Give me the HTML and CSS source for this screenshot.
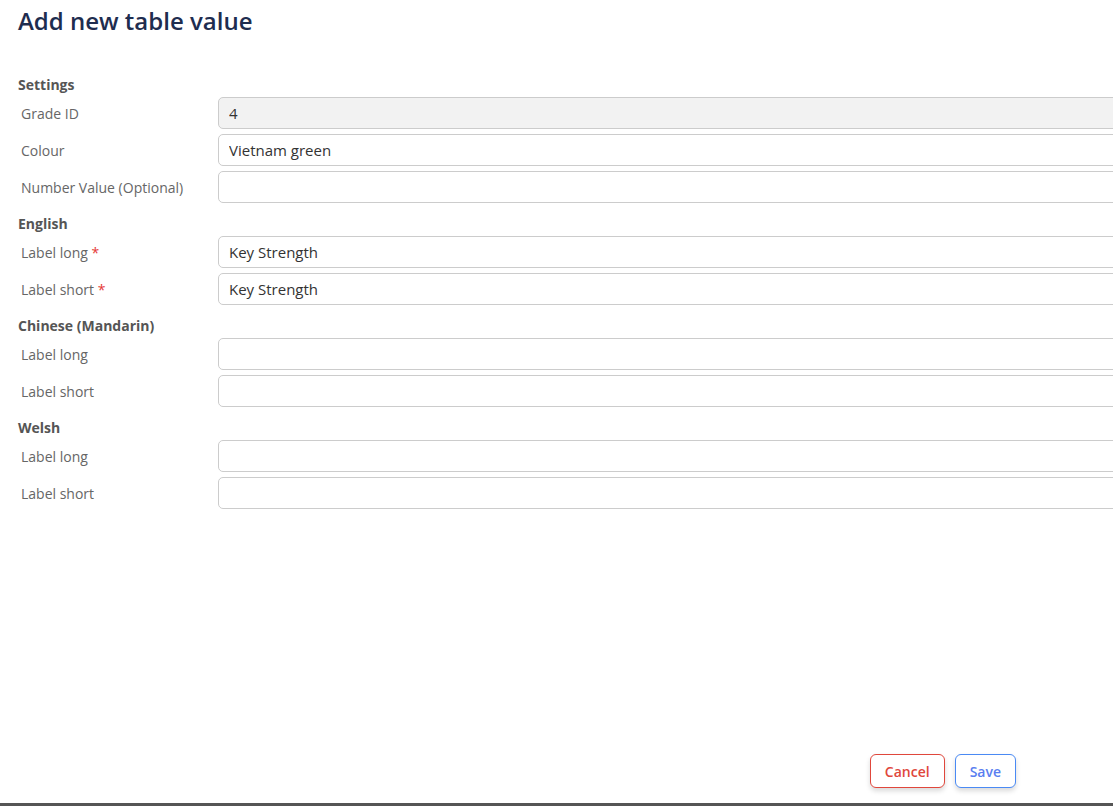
FILE: index.html
```html
<!DOCTYPE html>
<html lang="en">
  <head>
    <meta charset="UTF-8" />
    <meta name="viewport" content="width=device-width, initial-scale=1.0" />
    <title>Add new table value</title>
    <link rel="stylesheet" href="styles.css">
  </head>
  <body>
    <div class="page">
      <h1 class="title">Add new table value</h1>

      <form class="form">
        <div class="section">
          <h3 class="section-title">Settings</h3>
          <div class="field">
            <label>Grade ID</label>
            <input type="text" value="4" class="readonly" readonly />
          </div>
          <div class="field">
            <label>Colour</label>
            <input type="text" value="Vietnam green" />
          </div>
          <div class="field">
            <label>Number Value (Optional)</label>
            <input type="text" value="" />
          </div>
        </div>

        <div class="section">
          <h3 class="section-title">English</h3>
          <div class="field">
            <label>Label long <span class="req">*</span></label>
            <input type="text" value="Key Strength" />
          </div>
          <div class="field">
            <label>Label short <span class="req">*</span></label>
            <input type="text" value="Key Strength" />
          </div>
        </div>

        <div class="section">
          <h3 class="section-title">Chinese (Mandarin)</h3>
          <div class="field">
            <label>Label long</label>
            <input type="text" value="" />
          </div>
          <div class="field">
            <label>Label short</label>
            <input type="text" value="" />
          </div>
        </div>

        <div class="section">
          <h3 class="section-title">Welsh</h3>
          <div class="field">
            <label>Label long</label>
            <input type="text" value="" />
          </div>
          <div class="field">
            <label>Label short</label>
            <input type="text" value="" />
          </div>
        </div>
      </form>

      <div class="actions">
        <button type="button" class="btn btn-cancel">Cancel</button>
        <button type="button" class="btn btn-save">Save</button>
      </div>
    </div>
  </body>
</html>
```

FILE: styles.css
```css
html,
body {
  margin: 0;
  padding: 0;
  overflow: hidden;
}
body {
  font-family: "Open Sans", "Noto Sans", Arial, sans-serif;
  background-color: #fff;
  color: #333;
}
.page {
  height: 803px;
  border-bottom: 3px solid #555;
  display: flex;
  flex-direction: column;
  padding-left: 18px;
  overflow: hidden;
}
.title {
  margin: 0;
  padding-top: 5px;
  height: 64px;
  box-sizing: border-box;
  font-size: 24px;
  font-weight: 600;
  line-height: 32px;
  color: #1e2d4f;
}
/* form blocks */
.form {
  margin-right: -40px;
}
.section {
  display: flex;
  flex-direction: column;
  gap: 5px;
}
.section-title {
  margin: 0 0 -5px 0;
  padding: 11px 0 2px 0;
  font-size: 14px;
  line-height: 20px;
  font-weight: 700;
  color: #555;
}
.field {
  display: flex;
  align-items: center;
}
.field label {
  width: 200px;
  flex-shrink: 0;
  padding-left: 3px;
  box-sizing: border-box;
  font-size: 14px;
  color: #666;
}
.req {
  color: #e53935;
}
.field input {
  flex: 1;
  height: 32px;
  box-sizing: border-box;
  border: 1px solid #ccc;
  border-radius: 5px;
  padding: 0 10px;
  font-family: inherit;
  font-size: 15px;
  color: #333;
  background-color: #fff;
  outline: none;
}
.field input.readonly {
  background-color: #f2f2f2;
}
/* buttons at the bottom */
.actions {
  margin-top: auto;
  display: flex;
  justify-content: flex-end;
  gap: 10px;
  padding-right: 97px;
  padding-bottom: 15px;
}
.btn {
  height: 34px;
  padding: 0 14px;
  border-radius: 6px;
  background-color: #fff;
  font-family: inherit;
  font-size: 14px;
  font-weight: 600;
  cursor: pointer;
  box-shadow: 0 3px 5px rgba(0, 0, 0, 0.15);
}
.btn-cancel {
  border: 1px solid #e0473c;
  color: #e0473c;
}
.btn-save {
  border: 1px solid #4a8af4;
  color: #5a7ef0;
}
```
